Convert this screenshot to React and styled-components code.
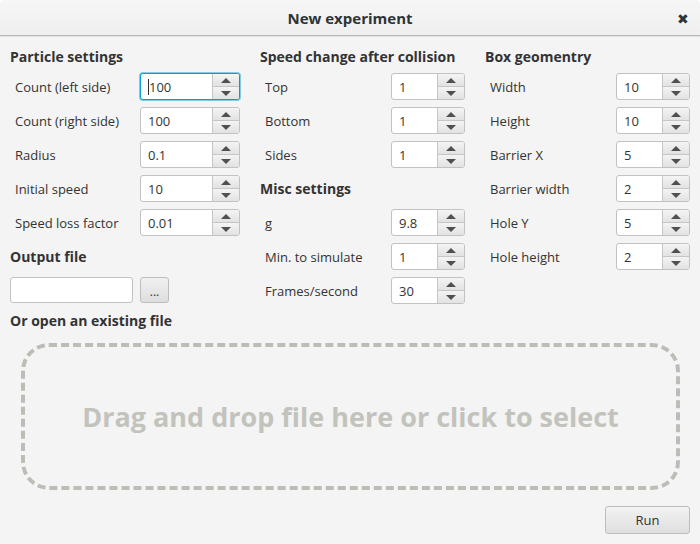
import styled, { createGlobalStyle } from "styled-components";

const GlobalStyle = createGlobalStyle`
  html, body {
    margin: 0;
    padding: 0;
    background: #ffffff;
  }

  * {
    box-sizing: border-box;
  }
`;

const particleRows = [
  { label: "Count (left side)", value: "100", focused: true },
  { label: "Count (right side)", value: "100" },
  { label: "Radius", value: "0.1" },
  { label: "Initial speed", value: "10" },
  { label: "Speed loss factor", value: "0.01" },
];

const speedRows = [
  { label: "Top", value: "1" },
  { label: "Bottom", value: "1" },
  { label: "Sides", value: "1" },
];

const miscRows = [
  { label: "g", value: "9.8" },
  { label: "Min. to simulate", value: "1" },
  { label: "Frames/second", value: "30" },
];

const boxRows = [
  { label: "Width", value: "10" },
  { label: "Height", value: "10" },
  { label: "Barrier X", value: "5" },
  { label: "Barrier width", value: "2" },
  { label: "Hole Y", value: "5" },
  { label: "Hole height", value: "2" },
];

function Spinner({ value, focused, wide }) {
  return (
    <SpinnerWrapper $focused={focused} $wide={wide}>
      <SpinnerField>
        {focused && <Caret />}
        {value}
      </SpinnerField>
      <SpinnerButtons>
        <ArrowButton>
          <Arrow $up />
        </ArrowButton>
        <ArrowButton>
          <Arrow />
        </ArrowButton>
      </SpinnerButtons>
    </SpinnerWrapper>
  );
}

function Rows({ rows, wide }) {
  return rows.map(row => (
    <Row key={row.label}>
      <Label $wide={wide}>{row.label}</Label>
      <Spinner value={row.value} focused={row.focused} wide={wide} />
    </Row>
  ));
}

function App() {
  return (
    <>
      <GlobalStyle />
      <Window>
        <TitleBar>
          <Title>New experiment</Title>
          <Close>✖</Close>
        </TitleBar>
        <Body>
          <Columns>
            <Column>
              <Header $first>Particle settings</Header>
              <Rows rows={particleRows} wide />
              <Header>Output file</Header>
              <OutputRow>
                <TextField />
                <SmallButton>...</SmallButton>
              </OutputRow>
            </Column>
            <Column>
              <Header $first>Speed change after collision</Header>
              <Rows rows={speedRows} />
              <Header>Misc settings</Header>
              <Rows rows={miscRows} />
            </Column>
            <Column>
              <Header $first>Box geomentry</Header>
              <Rows rows={boxRows} />
            </Column>
          </Columns>
          <Header $open>Or open an existing file</Header>
          <DropZone>Drag and drop file here or click to select</DropZone>
          <Footer>
            <RunButton>Run</RunButton>
          </Footer>
        </Body>
      </Window>
    </>
  );
}

const Window = styled.div`
  width: 700px;
  height: 544px;
  display: flex;
  flex-direction: column;
  background: #f4f4f4;
  border-radius: 5px 5px 0 0;
  overflow: hidden;
  font-family: "Open Sans", "Noto Sans", sans-serif;
  color: #333333;
`;

const TitleBar = styled.div`
  position: relative;
  height: 36px;
  flex-shrink: 0;
  display: flex;
  align-items: center;
  justify-content: center;
  background: linear-gradient(#f6f6f6, #efefef);
  border-bottom: 1px solid #b9b9b9;
  box-shadow: 0 1px 0 #e2e2e2;
`;

const Title = styled.div`
  font-size: 15px;
  font-weight: 700;
  color: #2e3436;
`;

const Close = styled.div`
  position: absolute;
  right: 11px;
  top: 9px;
  font-size: 14px;
  color: #2e3436;
`;

const Body = styled.div`
  flex: 1;
  display: flex;
  flex-direction: column;
  padding: 10px;
`;

const Columns = styled.div`
  display: grid;
  grid-template-columns: 250px 225px 205px;
`;

const Column = styled.div`
  display: flex;
  flex-direction: column;
`;

const Header = styled.div`
  height: 20px;
  line-height: 20px;
  font-size: 14px;
  font-weight: 700;
  color: #333333;
  margin: ${p => (p.$first ? "1px 0 6px" : p.$open ? "7px 0 12px" : "4px 0 10px")};
`;

const Row = styled.div`
  display: flex;
  align-items: center;
  height: 27px;
  margin-bottom: 7px;

  &:last-child {
    margin-bottom: 0;
  }
`;

const Label = styled.div`
  width: ${p => (p.$wide ? "130px" : "131px")};
  padding-left: 5px;
  font-size: 13px;
  color: #333333;
  white-space: nowrap;
`;

const SpinnerWrapper = styled.div`
  display: flex;
  width: ${p => (p.$wide ? "100px" : "74px")};
  height: 27px;
  border: 1px solid ${p => (p.$focused ? "#039ed3" : "#c2c2c2")};
  border-radius: 3px;
  box-shadow: ${p => (p.$focused ? "0 0 0 1px #7fcbe9" : "none")};
  overflow: hidden;
  background: #ffffff;
`;

const SpinnerField = styled.div`
  flex: 1;
  display: flex;
  align-items: center;
  padding-left: 7px;
  font-size: 13px;
  color: #333333;
`;

const Caret = styled.span`
  display: inline-block;
  width: 1px;
  height: 16px;
  background: #333333;
`;

const SpinnerButtons = styled.div`
  width: 27px;
  display: flex;
  flex-direction: column;
  border-left: 1px solid #c6c6c6;
`;

const ArrowButton = styled.div`
  flex: 1;
  display: flex;
  align-items: center;
  justify-content: center;
  background: linear-gradient(#f4f4f4, #e2e2e2);

  & + & {
    border-top: 1px solid #c6c6c6;
  }
`;

const Arrow = styled.span`
  width: 0;
  height: 0;
  border-left: 5px solid transparent;
  border-right: 5px solid transparent;
  ${p =>
    p.$up
      ? "border-bottom: 5px solid #505050;"
      : "border-top: 5px solid #505050;"}
`;

const OutputRow = styled.div`
  display: flex;
  gap: 7px;
`;

const TextField = styled.div`
  width: 123px;
  height: 26px;
  background: #ffffff;
  border: 1px solid #c2c2c2;
  border-radius: 3px;
`;

const SmallButton = styled.div`
  width: 29px;
  height: 26px;
  display: flex;
  align-items: center;
  justify-content: center;
  padding-top: 3px;
  font-size: 12px;
  color: #333333;
  background: linear-gradient(#f0f0f0, #dedede);
  border: 1px solid #bdbdbd;
  border-radius: 3px;
`;

const DropZone = styled.div`
  height: 147px;
  margin: 0 10px 0 11px;
  display: flex;
  align-items: center;
  justify-content: center;
  border: 4px dashed #bdbdb7;
  border-radius: 28px;
  font-size: 27px;
  font-weight: 700;
  color: #c3c3bd;
`;

const Footer = styled.div`
  display: flex;
  justify-content: flex-end;
  margin-top: 16px;
`;

const RunButton = styled.div`
  width: 85px;
  height: 28px;
  display: flex;
  align-items: center;
  justify-content: center;
  font-size: 13px;
  color: #333333;
  background: linear-gradient(#f2f2f2, #dfdfdf);
  border: 1px solid #bdbdbd;
  border-radius: 3px;
`;

export default App;
